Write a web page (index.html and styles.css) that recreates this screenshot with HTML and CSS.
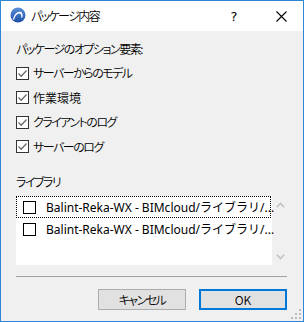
FILE: index.html
```html
<!DOCTYPE html>
<html lang="ja">
<head>
<meta charset="utf-8">
<link rel="stylesheet" href="styles.css">
</head>
<body>
<div class="window">
  <div class="titlebar">
    <svg class="app-icon" width="16" height="16" viewBox="0 0 16 16">
      <defs>
        <linearGradient id="g" x1="0" y1="0" x2="0" y2="1">
          <stop offset="0" stop-color="#5b8fd8"/>
          <stop offset="1" stop-color="#1d4fa8"/>
        </linearGradient>
      </defs>
      <circle cx="8" cy="8" r="7.5" fill="url(#g)"/>
      <path d="M3 12.5 C4 7 7.5 4 10.5 4.8 C12.6 5.4 13 8 12.4 10.8 L11.2 10.5 C11.6 8.2 11 6.6 9.6 6.4 C7.3 6.2 5 8.6 4.2 12.8 Z" fill="#fff"/>
    </svg>
    <span class="title">パッケージ内容</span>
    <span class="help">?</span>
    <svg class="close" width="11" height="11" viewBox="0 0 11 11">
      <path d="M0.5 0.5 L10.5 10.5 M10.5 0.5 L0.5 10.5" stroke="#000" stroke-width="1.1"/>
    </svg>
  </div>
  <div class="content">
    <div class="heading">パッケージのオプション要素:</div>
    <div class="options">
      <label class="opt"><span class="cb checked"><svg width="11" height="11" viewBox="0 0 11 11"><path d="M1.5 5.5 L4.2 8.2 L9.5 2.5" fill="none" stroke="#6a6a6a" stroke-width="1.3"/></svg></span>サーバーからのモデル</label>
      <label class="opt kanji"><span class="cb checked"><svg width="11" height="11" viewBox="0 0 11 11"><path d="M1.5 5.5 L4.2 8.2 L9.5 2.5" fill="none" stroke="#6a6a6a" stroke-width="1.3"/></svg></span>作業環境</label>
      <label class="opt"><span class="cb checked"><svg width="11" height="11" viewBox="0 0 11 11"><path d="M1.5 5.5 L4.2 8.2 L9.5 2.5" fill="none" stroke="#6a6a6a" stroke-width="1.3"/></svg></span>クライアントのログ</label>
      <label class="opt"><span class="cb checked"><svg width="11" height="11" viewBox="0 0 11 11"><path d="M1.5 5.5 L4.2 8.2 L9.5 2.5" fill="none" stroke="#6a6a6a" stroke-width="1.3"/></svg></span>サーバーのログ</label>
    </div>
    <div class="lib-label">ライブラリ</div>
    <div class="listbox">
      <div class="list">
        <div class="item focus"><span class="lcb"></span><span class="itext">Balint-Reka-WX - BIMcloud/ライブラリ/...</span></div>
        <div class="item"><span class="lcb"></span><span class="itext">Balint-Reka-WX - BIMcloud/ライブラリ/...</span></div>
      </div>
      <div class="scrollbar">
        <svg width="9" height="6" viewBox="0 0 9 6"><path d="M0.8 5.2 L4.5 1.5 L8.2 5.2" fill="none" stroke="#c2c2c2" stroke-width="1.6"/></svg>
        <svg width="9" height="6" viewBox="0 0 9 6"><path d="M0.8 0.8 L4.5 4.5 L8.2 0.8" fill="none" stroke="#c2c2c2" stroke-width="1.6"/></svg>
      </div>
    </div>
    <div class="separator"></div>
    <div class="buttons">
      <button class="btn">キャンセル</button>
      <button class="btn default">OK</button>
    </div>
  </div>
  <svg class="grip" width="10" height="10" viewBox="0 0 10 10">
    <rect x="8" y="0" width="2" height="2" fill="#bcbcbc"/>
    <rect x="4" y="4" width="2" height="2" fill="#bcbcbc"/>
    <rect x="8" y="4" width="2" height="2" fill="#bcbcbc"/>
    <rect x="0" y="8" width="2" height="2" fill="#bcbcbc"/>
    <rect x="4" y="8" width="2" height="2" fill="#bcbcbc"/>
    <rect x="8" y="8" width="2" height="2" fill="#bcbcbc"/>
  </svg>
</div>
</body>
</html>
```

FILE: styles.css
```css
* { box-sizing: border-box; }
html, body { margin: 0; padding: 0; }
body {
  font-family: "Noto Sans", "Noto Sans CJK JP", sans-serif;
  font-size: 12px;
  color: #000;
  background: #fff;
}
.window {
  position: relative;
  width: 304px;
  height: 322px;
  border: 1px solid #2d87d6;
  background: #f0f0f0;
  display: flex;
  flex-direction: column;
}
.titlebar {
  height: 30px;
  background: #fff;
  display: flex;
  align-items: center;
  padding-left: 9px;
}
.app-icon { margin-top: -2px; }
.title {
  margin-left: 5px;
  font-family: "Noto Sans CJK JP", sans-serif;
  font-feature-settings: "palt";
  font-weight: 350;
  letter-spacing: -1.6px;
  font-size: 12px;
  line-height: 16px;
}
.help {
  margin-left: auto;
  width: 14px;
  text-align: center;
  font-family: "DejaVu Sans", sans-serif;
  font-size: 13px;
}
.close {
  margin-left: 35px;
  margin-right: 16px;
}
.content {
  flex: 1;
  padding: 10px 15px 0 15px;
  display: flex;
  flex-direction: column;
}
.heading, .lib-label, .opt {
  font-family: "Noto Sans CJK JP", sans-serif;
  font-feature-settings: "palt";
  font-weight: 350;
  letter-spacing: -1.5px;
  font-size: 12px;
  line-height: 16px;
  height: 16px;
}
.options {
  margin-top: 4px;
  display: grid;
  grid-template-rows: 24px 25px 24px 25px;
}
.opt {
  height: auto;
  display: flex;
  align-items: center;
  gap: 4px;
}
.opt.kanji { letter-spacing: 0; }
.cb {
  width: 13px;
  height: 13px;
  border: 1px solid #333;
  background: #fff;
  display: flex;
  align-items: center;
  justify-content: center;
}
.lib-label { margin-top: 15px; }
.listbox {
  margin-top: 6px;
  height: 69px;
  width: 273px;
  display: flex;
}
.list {
  width: 256px;
  background: #fff;
}
.item {
  height: 22px;
  display: flex;
  align-items: center;
  padding-left: 7px;
  border: 1px solid transparent;
  width: 255px;
}
.item.focus { border: 1px dotted #000; }
.lcb {
  width: 13px;
  height: 13px;
  border: 1px solid #000;
  background: #fff;
  flex: none;
  margin-left: -1px;
}
.itext {
  margin-left: 10px;
  font-family: "Noto Sans", "Noto Sans CJK JP", sans-serif;
  font-size: 12px;
  white-space: nowrap;
  color: #000;
}
.scrollbar {
  width: 17px;
  display: flex;
  flex-direction: column;
  justify-content: space-between;
  align-items: center;
  padding: 6px 0 5px 0;
}
.separator {
  margin-top: 11px;
  height: 1px;
  width: 271px;
  background: #a0a0a0;
}
.buttons {
  margin-top: 12px;
  width: 271px;
  display: flex;
  justify-content: flex-end;
  gap: 13px;
}
.btn {
  width: 88px;
  height: 21px;
  background: #e1e1e1;
  border: 1px solid #adadad;
  font-family: "Noto Sans CJK JP", "Noto Sans", sans-serif;
  font-feature-settings: "palt";
  font-weight: 350;
  letter-spacing: -1.5px;
  font-size: 12px;
  padding: 0;
  line-height: 17px;
  color: #000;
}
.btn.default { border: 2px solid #0078d7; letter-spacing: 0; }
.grip {
  position: absolute;
  right: 2px;
  bottom: 2px;
}
```
